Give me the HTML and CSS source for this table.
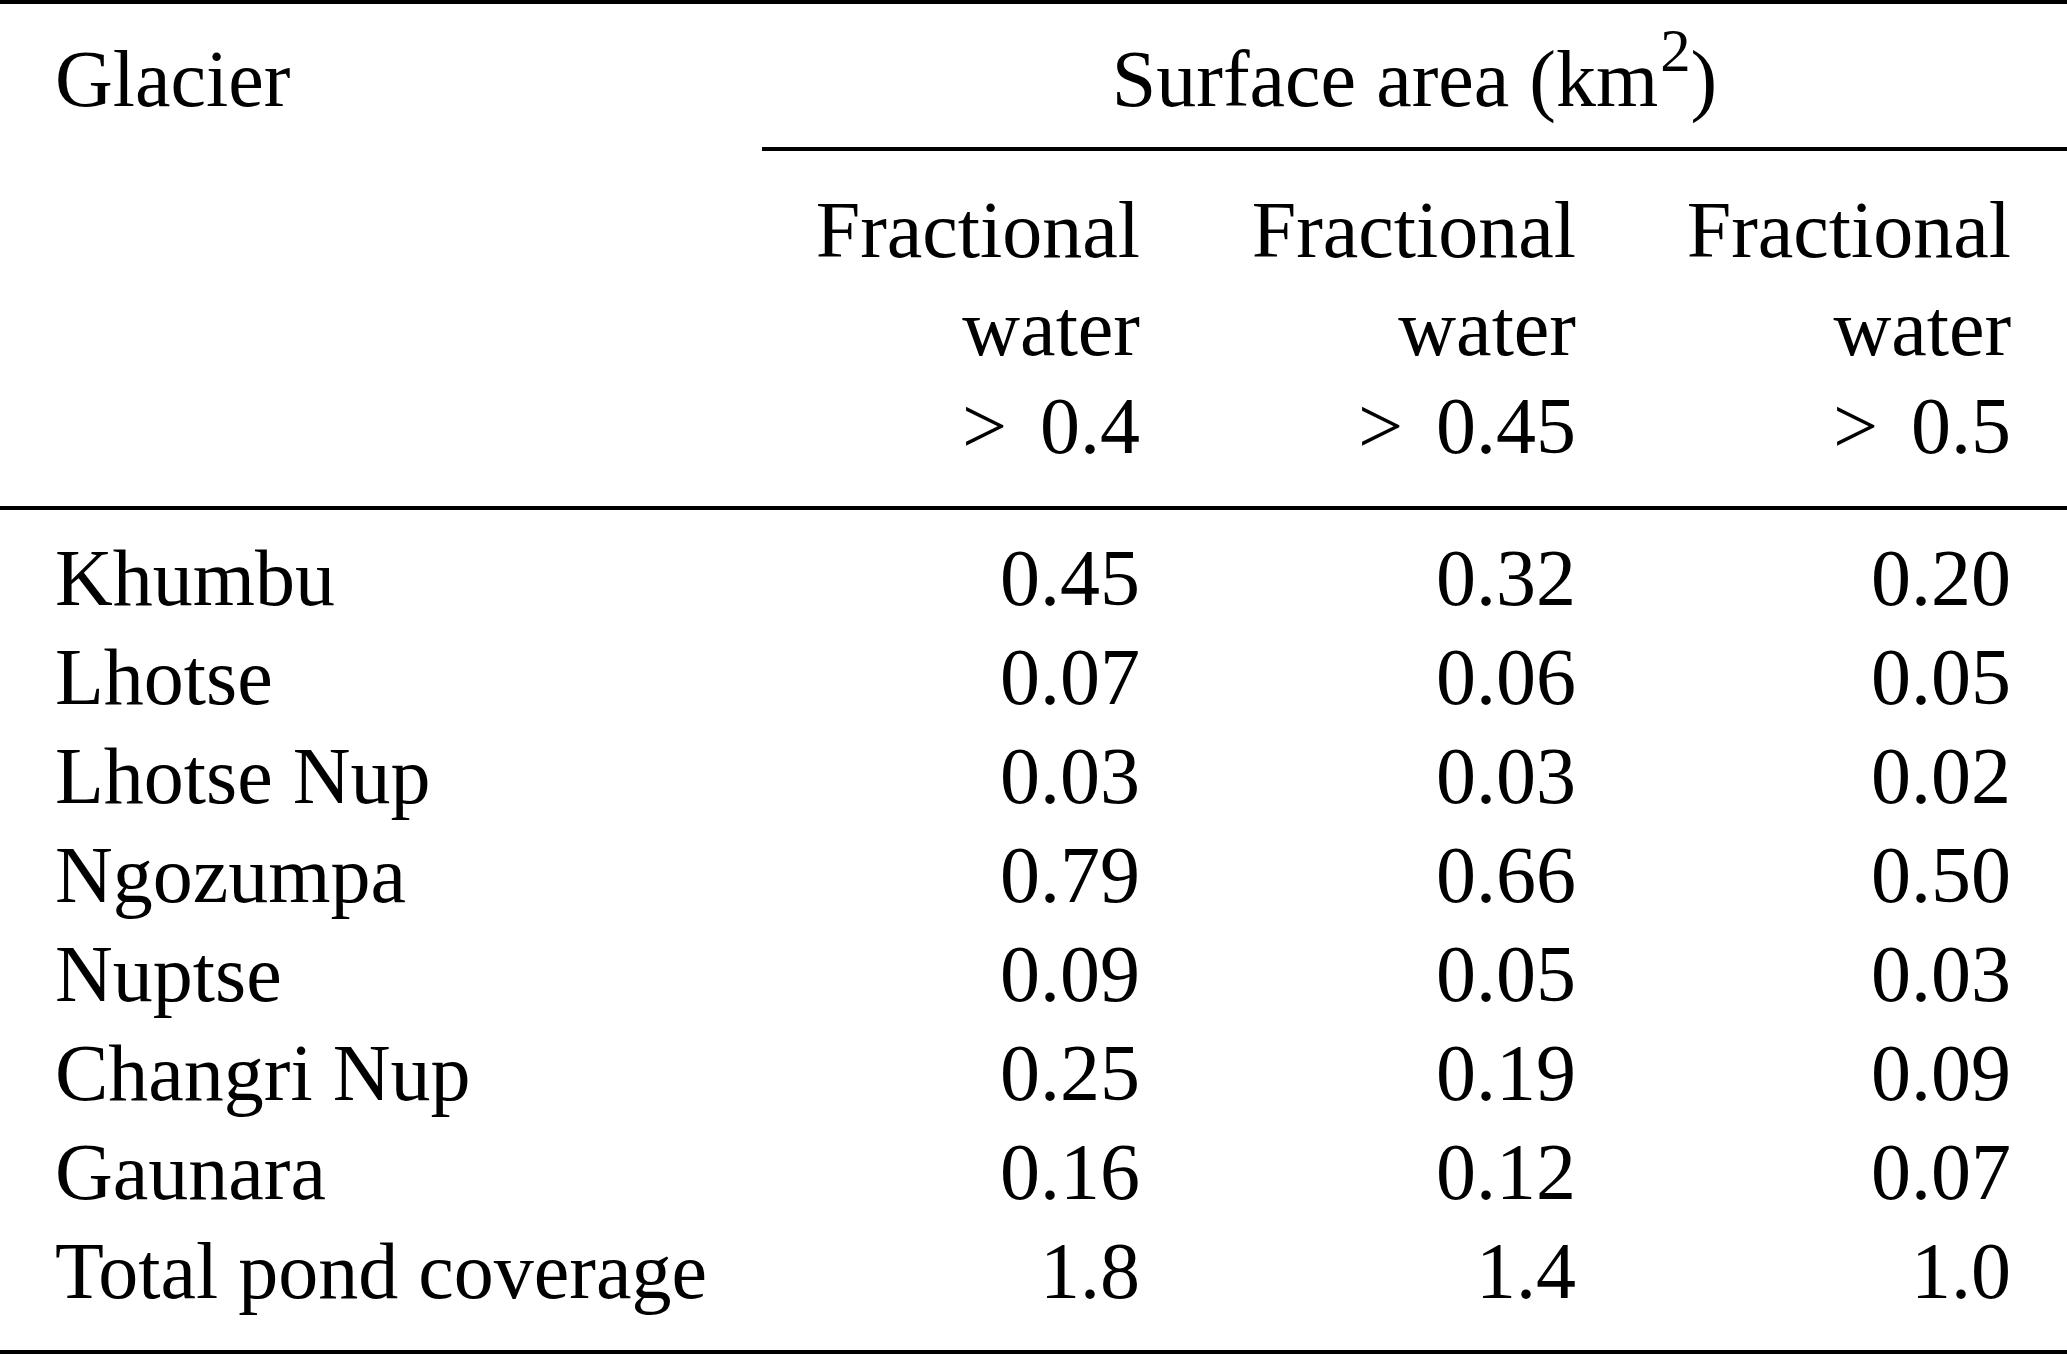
FILE: index.html
```html
<!DOCTYPE html>
<html lang="en">
<head>
<meta charset="utf-8">
<title>Glacier pond coverage</title>
<link rel="stylesheet" href="styles.css">
</head>
<body>
<table class="tbl">
  <colgroup>
    <col class="c-name">
    <col class="c-a">
    <col class="c-b">
    <col class="c-c">
  </colgroup>
  <thead>
    <tr class="row-top">
      <th class="name">Glacier</th>
      <th class="group" colspan="3"><span class="group-text">Surface area (km<sup class="sup">2</sup>)</span></th>
    </tr>
    <tr class="row-sub">
      <th class="name"></th>
      <th class="num">Fractional<br>water<br><span class="gt">&gt;</span> 0.4</th>
      <th class="num">Fractional<br>water<br><span class="gt">&gt;</span> 0.45</th>
      <th class="num">Fractional<br>water<br><span class="gt">&gt;</span> 0.5</th>
    </tr>
  </thead>
  <tbody>
    <tr class="row-first"><td class="name">Khumbu</td><td class="num">0.45</td><td class="num">0.32</td><td class="num">0.20</td></tr>
    <tr><td class="name">Lhotse</td><td class="num">0.07</td><td class="num">0.06</td><td class="num">0.05</td></tr>
    <tr><td class="name">Lhotse Nup</td><td class="num">0.03</td><td class="num">0.03</td><td class="num">0.02</td></tr>
    <tr><td class="name">Ngozumpa</td><td class="num">0.79</td><td class="num">0.66</td><td class="num">0.50</td></tr>
    <tr><td class="name">Nuptse</td><td class="num">0.09</td><td class="num">0.05</td><td class="num">0.03</td></tr>
    <tr><td class="name">Changri Nup</td><td class="num">0.25</td><td class="num">0.19</td><td class="num">0.09</td></tr>
    <tr><td class="name">Gaunara</td><td class="num">0.16</td><td class="num">0.12</td><td class="num">0.07</td></tr>
    <tr class="row-last"><td class="name">Total pond coverage</td><td class="num">1.8</td><td class="num">1.4</td><td class="num">1.0</td></tr>
  </tbody>
</table>
</body>
</html>
```

FILE: styles.css
```css
html, body {
  margin: 0;
  padding: 0;
  background: #ffffff;
}

body {
  color: #000000;
  font-family: "Liberation Serif", "Times New Roman", serif;
  font-size: 80px;
  line-height: 99px;
}

.tbl {
  width: 2067px;
  table-layout: fixed;
  border-collapse: separate;
  border-spacing: 0;
}

.c-name { width: 762px; }
.c-a { width: 434px; }
.c-b { width: 436px; }
.c-c { width: 435px; }

.tbl th,
.tbl td {
  padding: 0;
  font-weight: normal;
  vertical-align: top;
}

.name {
  text-align: left;
  padding-left: 55px !important;
}

.num {
  text-align: right;
  padding-right: 56px !important;
}

.row-top th {
  border-top: 4px solid #000;
  padding-top: 25.5px;
  padding-bottom: 18.5px;
}

.row-top .group {
  text-align: center;
  border-bottom: 4px solid #000;
}

.sup {
  font-size: 0.76em;
  line-height: 0;
  vertical-align: 0.56em;
  margin-left: 2px;
}

.gt {
  margin-right: 0.16em;
}

.row-sub th {
  padding-top: 29.5px;
  padding-bottom: 31.5px;
  line-height: 98px;
  border-bottom: 4px solid #000;
}

.row-first td {
  padding-top: 18.5px;
}

.row-last td {
  padding-bottom: 29px;
  border-bottom: 4px solid #000;
}
```
